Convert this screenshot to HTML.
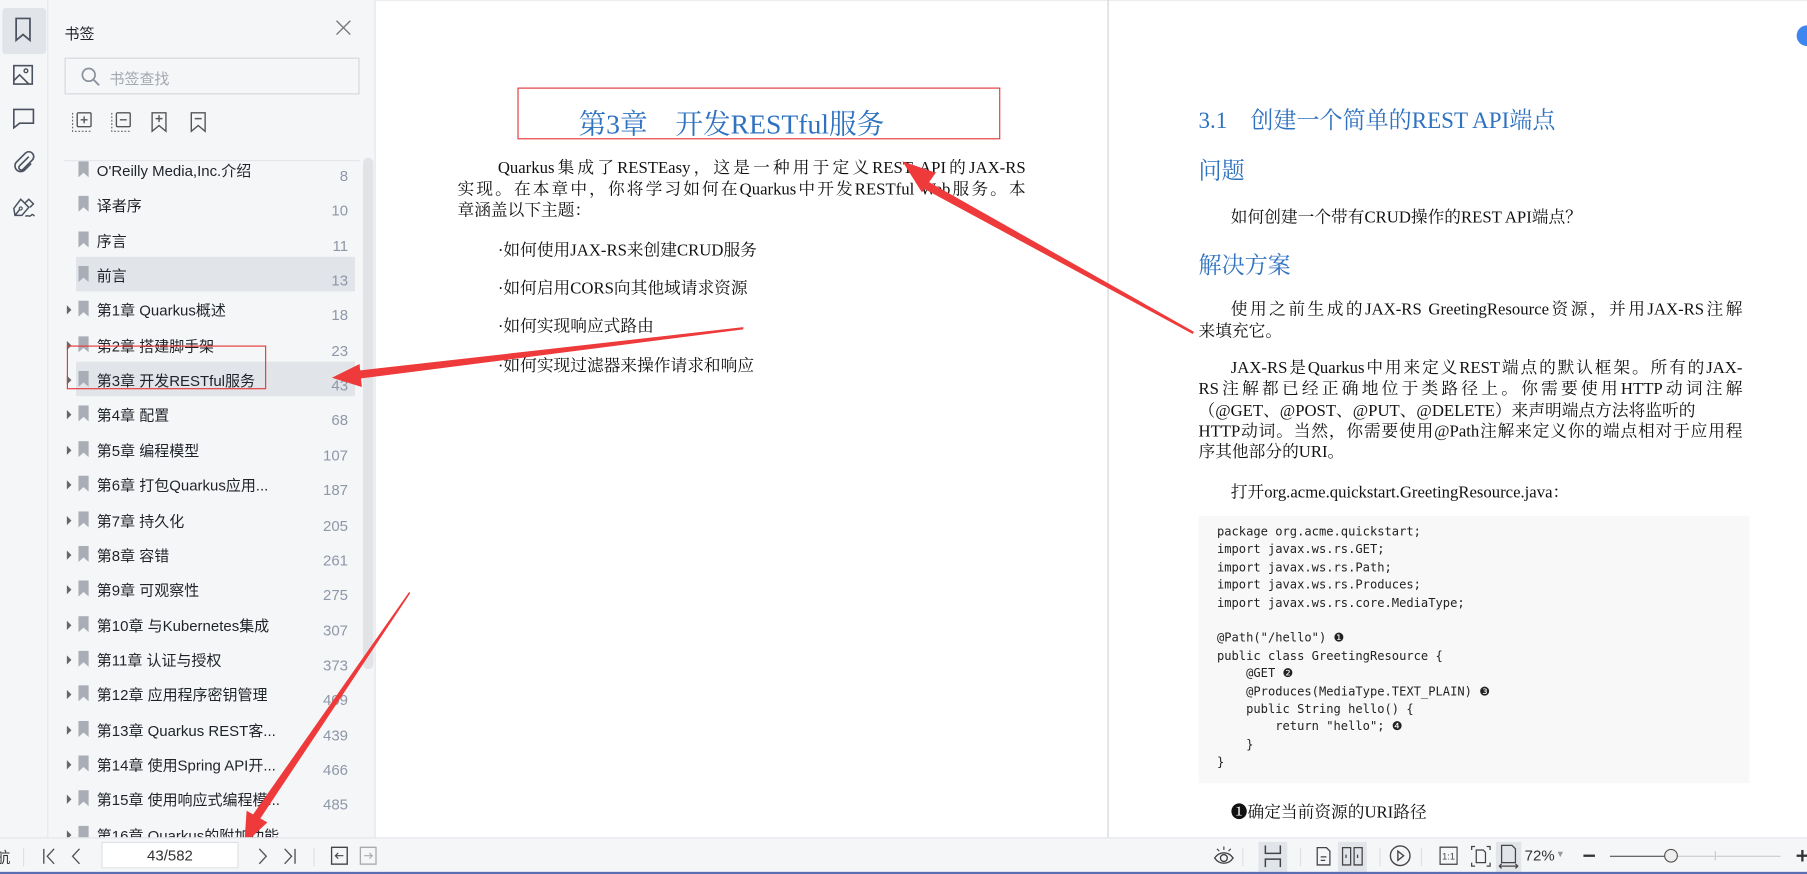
<!DOCTYPE html>
<html><head><meta charset="utf-8"><style>
*{margin:0;padding:0;box-sizing:border-box}
html,body{width:1807px;height:873px;overflow:hidden;background:#fff}
#w{position:absolute;left:0;top:0;width:1568px;height:758px;transform:scale(1.15242,1.15172);transform-origin:0 0;font-family:"Liberation Sans","Noto Sans CJK SC",sans-serif}
.a{position:absolute;white-space:nowrap}
.strip{position:absolute;left:0;top:0;width:42px;height:727px;background:#f5f6f8;border-right:1px solid #e3e5e8}
.side{position:absolute;left:42px;top:0;width:284px;height:727px;background:#f5f6f8;border-right:1px solid #e3e5e8}
.row{position:absolute;left:66px;width:242px;height:30px}
.row .t{position:absolute;left:18px;top:6px;font-size:13px;color:#1f2329}
.row .n{position:absolute;right:6px;top:13px;font-size:13px;color:#8e97a8}
.row .bm{position:absolute;left:2px;top:8px}
.row .tri{position:absolute;left:-8px;top:12px;width:0;height:0;border-left:4px solid #666;border-top:4px solid transparent;border-bottom:4px solid transparent}
.hl{background:#e1e4e9}
.ser{font-family:"Liberation Serif","Noto Serif CJK SC",serif;color:#111}
.blue{color:#2f72c0}
.jl{text-align:justify;text-align-last:justify;white-space:normal}
.code{font-family:"DejaVu Sans Mono","Liberation Mono",monospace;font-size:10.5px;color:#222;line-height:15.4px;white-space:pre}
.bb{position:absolute;left:0;top:727px;width:1568px;height:31px;background:#f5f6f8;border-top:1px solid #e3e5e8}
.ic{position:absolute}
.sep{position:absolute;top:8px;width:1px;height:16px;background:#dcdfe3}
</style></head><body><div id="w">

<div class="strip">
 <div class="a" style="left:2px;top:7px;width:38px;height:40px;background:#e1e4e9;border-radius:3px"></div>
 <svg class="ic" style="left:12px;top:15px" width="16" height="22" viewBox="0 0 16 22"><path d="M2 1h12v19l-6-5-6 5z" fill="none" stroke="#4a5160" stroke-width="1.5"/></svg>
 <svg class="ic" style="left:11px;top:56px" width="18" height="18" viewBox="0 0 18 18"><rect x="1" y="1" width="16" height="16" fill="none" stroke="#4a5160" stroke-width="1.4"/><circle cx="11.5" cy="5.5" r="1.6" fill="none" stroke="#4a5160" stroke-width="1.2"/><path d="M1 14l5-5 8 8" fill="none" stroke="#4a5160" stroke-width="1.4"/></svg>
 <svg class="ic" style="left:11px;top:94px" width="19" height="18" viewBox="0 0 19 18"><path d="M1 1h17v12H6l-5 4z" fill="none" stroke="#4a5160" stroke-width="1.4"/></svg>
 <svg class="ic" style="left:11px;top:131px" width="19" height="19" viewBox="0 0 19 19"><path d="M14 5L6 13a2 2 0 0 0 3 3l8-8a4 4 0 0 0-6-6L3 10a5 5 0 0 0 7 7l6-6" fill="none" stroke="#4a5160" stroke-width="1.4"/></svg>
 <svg class="ic" style="left:10px;top:171px" width="21" height="20" viewBox="0 0 21 20"><path d="M8 2l7 7-6 7H3l-1-6z M3 16l4-5 M12 5l3-3 4 4-3 3 M12 17c2-2 3 1 5-1s2 1 3 0" fill="none" stroke="#4a5160" stroke-width="1.3"/><circle cx="8" cy="10" r="1.3" fill="none" stroke="#4a5160"/></svg>
</div>

<div class="side">
 <div class="a" style="left:14px;top:19px;font-size:13px;color:#1f2329">书签</div>
 <svg class="ic" style="left:249px;top:17px" width="14" height="14" viewBox="0 0 14 14"><path d="M1 1l12 12M13 1L1 13" stroke="#777" stroke-width="1.2"/></svg>
 <div class="a" style="left:14px;top:50px;width:256px;height:32px;border:1px solid #d4d7dc;background:#f5f6f8"></div>
 <svg class="ic" style="left:28px;top:58px" width="17" height="17" viewBox="0 0 17 17"><circle cx="7" cy="7" r="5.5" fill="none" stroke="#8a919c" stroke-width="1.5"/><path d="M11 11l5 5" stroke="#8a919c" stroke-width="1.6"/></svg>
 <div class="a" style="left:53px;top:58px;font-size:13px;color:#a3a8b0">书签查找</div>
 <svg class="ic" style="left:20px;top:97px" width="18" height="18" viewBox="0 0 18 18"><path d="M1 1v16h16" fill="none" stroke="#666" stroke-dasharray="1.5 1.5"/><rect x="5" y="1" width="12" height="12" rx="1" fill="none" stroke="#555" stroke-width="1.2"/><path d="M11 4v6M8 7h6" stroke="#555" stroke-width="1.2"/></svg>
 <svg class="ic" style="left:54px;top:97px" width="18" height="18" viewBox="0 0 18 18"><path d="M1 1v16h16" fill="none" stroke="#666" stroke-dasharray="1.5 1.5"/><rect x="5" y="1" width="12" height="12" rx="1" fill="none" stroke="#555" stroke-width="1.2"/><path d="M8 7h6" stroke="#555" stroke-width="1.2"/></svg>
 <svg class="ic" style="left:89px;top:97px" width="14" height="18" viewBox="0 0 14 18"><path d="M1 1h12v16l-6-5-6 5z" fill="none" stroke="#555" stroke-width="1.2"/><path d="M7 3v6M4 6h6" stroke="#555" stroke-width="1.2"/></svg>
 <svg class="ic" style="left:123px;top:97px" width="14" height="18" viewBox="0 0 14 18"><path d="M1 1h12v16l-6-5-6 5z" fill="none" stroke="#555" stroke-width="1.2"/><path d="M4 6h6" stroke="#555" stroke-width="1.2"/></svg>
 <div class="a" style="left:14px;top:139px;width:256px;height:1px;background:#e2e4e8"></div>
 <div class="a" style="left:273px;top:137px;width:9px;height:444px;border-radius:5px;background:#e1e3e7"></div>
</div>

<div id="rows"></div>
<script>
var R=[["O'Reilly Media,Inc.介绍","8",0],["译者序","10",0],["序言","11",0],["前言","13",0,1],["第1章 Quarkus概述","18",1],["第2章 搭建脚手架","23",1],["第3章 开发RESTful服务","43",1,1],["第4章 配置","68",1],["第5章 编程模型","107",1],["第6章 打包Quarkus应用...","187",1],["第7章 持久化","205",1],["第8章 容错","261",1],["第9章 可观察性","275",1],["第10章 与Kubernetes集成","307",1],["第11章 认证与授权","373",1],["第12章 应用程序密钥管理","409",1],["第13章 Quarkus REST客...","439",1],["第14章 使用Spring API开...","466",1],["第15章 使用响应式编程模...","485",1],["第16章 Quarkus的附加功能","",1]];
var h="";R.forEach(function(r,i){var y=132+i*30.35;h+='<div class="row'+(r[3]?' hl':'')+'" style="top:'+y+'px">'+(r[2]?'<div class="tri"></div>':'')+'<svg class="bm" width="9" height="14" viewBox="0 0 9 14"><path d="M0 0h9v14l-4.5-4L0 14z" fill="#a9aeb6"/></svg><div class="t">'+r[0]+'</div><div class="n">'+r[1]+'</div></div>';});
document.getElementById("rows").innerHTML=h;
</script>

<!-- pages -->
<div class="a" style="left:326px;top:0;width:1242px;height:1px;background:#eee"></div>
<div class="a" style="left:961px;top:0;width:1px;height:727px;background:#cfd2d6"></div>
<div class="a" style="left:1559px;top:22px;width:18px;height:18px;border-radius:50%;background:#3d86f0"></div>

<div class="a" style="left:449px;top:76px;width:419px;height:45px;border:1px solid #e5393b"></div>
<div class="a ser blue" style="left:502px;top:88px;font-size:24px;color:#2f72c0">第3章　开发RESTful服务</div>
<div class="a ser" style="left:397px;top:137px;width:493px;font-size:14.5px;line-height:18.5px">
 <div class="jl" style="text-indent:35px">Quarkus集成了RESTEasy，这是一种用于定义REST API的JAX-RS</div>
 <div class="jl">实现。在本章中，你将学习如何在Quarkus中开发RESTful Web服务。本</div>
 <div>章涵盖以下主题：</div>
</div>
<div class="a ser" style="left:432px;top:206px;font-size:14.5px">·如何使用JAX-RS来创建CRUD服务</div>
<div class="a ser" style="left:432px;top:239px;font-size:14.5px">·如何启用CORS向其他域请求资源</div>
<div class="a ser" style="left:432px;top:272px;font-size:14.5px">·如何实现响应式路由</div>
<div class="a ser" style="left:432px;top:306px;font-size:14.5px">·如何实现过滤器来操作请求和响应</div>

<div class="a ser blue" style="left:1040px;top:88px;font-size:20px;color:#2f72c0">3.1　创建一个简单的REST API端点</div>
<div class="a ser blue" style="left:1040px;top:132px;font-size:20px;color:#2f72c0">问题</div>
<div class="a ser" style="left:1068px;top:177px;font-size:14.5px">如何创建一个带有CRUD操作的REST API端点？</div>
<div class="a ser blue" style="left:1040px;top:214px;font-size:20px;color:#2f72c0">解决方案</div>
<div class="a ser" style="left:1040px;top:260px;width:472px;font-size:14.5px;line-height:18.5px">
 <div class="jl" style="text-indent:28px">使用之前生成的JAX-RS GreetingResource资源，并用JAX-RS注解</div>
 <div>来填充它。</div>
</div>
<div class="a ser" style="left:1040px;top:311px;width:472px;font-size:14.5px;line-height:18.3px">
 <div class="jl" style="text-indent:28px">JAX-RS是Quarkus中用来定义REST端点的默认框架。所有的JAX-</div>
 <div class="jl">RS注解都已经正确地位于类路径上。你需要使用HTTP动词注解</div>
 <div>（@GET、@POST、@PUT、@DELETE）来声明端点方法将监听的</div>
 <div class="jl">HTTP动词。当然，你需要使用@Path注解来定义你的端点相对于应用程</div>
 <div>序其他部分的URI。</div>
</div>
<div class="a ser" style="left:1068px;top:416px;font-size:14.5px">打开org.acme.quickstart.GreetingResource.java：</div>
<div class="a" style="left:1040px;top:448px;width:478px;height:232px;background:#f8f8f8"></div>
<div class="a code" style="left:1056px;top:455px">package org.acme.quickstart;
import javax.ws.rs.GET;
import javax.ws.rs.Path;
import javax.ws.rs.Produces;
import javax.ws.rs.core.MediaType;

@Path("/hello") ❶
public class GreetingResource {
    @GET ❷
    @Produces(MediaType.TEXT_PLAIN) ❸
    public String hello() {
        return "hello"; ❹
    }
}</div>
<div class="a ser" style="left:1068px;top:694px;font-size:14.5px">❶确定当前资源的URI路径</div>

<div class="a" style="left:58px;top:300px;width:173px;height:38px;border:1px solid #e5393b"></div>

<svg class="a" style="left:0;top:0" width="1568" height="758">
 <g fill="#ee3a3a">
  <polygon points="1035,290 1036,288 806,158 802,164"/>
  <polygon points="783,140 812,150 800,167"/>
  <polygon points="645,284 645,286 310,329 309,322"/>
  <polygon points="288,328 312,316 314,336"/>
  <polygon points="355,514 356,515 225,712 219,708"/>
  <polygon points="212,733 214,704 232,714"/>
 </g>
</svg>

<div class="bb">
 <div class="a" style="left:-4px;top:6px;font-size:13px;color:#333">航</div>
 <div class="sep" style="left:20px"></div>
 <svg class="ic" style="left:37px;top:8px" width="12" height="15" viewBox="0 0 12 15"><path d="M1 1v13M10 1L4 7.5 10 14" fill="none" stroke="#555" stroke-width="1.2"/></svg>
 <svg class="ic" style="left:61px;top:8px" width="10" height="15" viewBox="0 0 10 15"><path d="M8 1L2 7.5 8 14" fill="none" stroke="#555" stroke-width="1.2"/></svg>
 <div class="a" style="left:88px;top:3px;width:119px;height:23px;background:#fff;border:1px solid #dde0e4;text-align:center;font-size:13px;line-height:21px;color:#333">43/582</div>
 <svg class="ic" style="left:223px;top:8px" width="10" height="15" viewBox="0 0 10 15"><path d="M2 1l6 6.5L2 14" fill="none" stroke="#555" stroke-width="1.2"/></svg>
 <svg class="ic" style="left:245px;top:8px" width="12" height="15" viewBox="0 0 12 15"><path d="M11 1v13M2 1l6 6.5L2 14" fill="none" stroke="#555" stroke-width="1.2"/></svg>
 <div class="sep" style="left:272px"></div>
 <svg class="ic" style="left:287px;top:7px" width="15" height="16" viewBox="0 0 15 16"><rect x="0.7" y="0.7" width="13.6" height="14.6" fill="none" stroke="#444" stroke-width="1.2"/><path d="M11 8H4M6.5 5.5L4 8l2.5 2.5" fill="none" stroke="#444"/></svg>
 <svg class="ic" style="left:312px;top:7px" width="15" height="16" viewBox="0 0 15 16"><rect x="0.7" y="0.7" width="13.6" height="14.6" fill="none" stroke="#aaa" stroke-width="1.2"/><path d="M4 8h7M8.5 5.5L11 8l-2.5 2.5" fill="none" stroke="#aaa"/></svg>

 <svg class="ic" style="left:1052px;top:6px" width="20" height="18" viewBox="0 0 20 18"><path d="M2 11c4-6 12-6 16 0-4 6-12 6-16 0z" fill="none" stroke="#444" stroke-width="1.2"/><circle cx="10" cy="11" r="3" fill="none" stroke="#444" stroke-width="1.2"/><path d="M10 1v3M4 3l2 2M16 3l-2 2" stroke="#444"/></svg>
 <div class="sep" style="left:1078px"></div>
 <div class="a" style="left:1092px;top:3px;width:25px;height:26px;background:#e1e4e9"></div>
 <svg class="ic" style="left:1096px;top:6px" width="17" height="19" viewBox="0 0 17 19"><path d="M2 0v7h13V0M2 19v-7h13v7" fill="none" stroke="#444" stroke-width="1.3"/></svg>
 <div class="sep" style="left:1128px"></div>
 <svg class="ic" style="left:1142px;top:7px" width="13" height="17" viewBox="0 0 13 17"><path d="M1 1h8l3 3v12H1z M4 9h5M4 12h4" fill="none" stroke="#444" stroke-width="1.1"/></svg>
 <div class="a" style="left:1161px;top:3px;width:25px;height:26px;background:#e1e4e9"></div>
 <svg class="ic" style="left:1164px;top:7px" width="19" height="17" viewBox="0 0 19 17"><path d="M1 1h7v15H1zM11 1h7v15h-7zM4 7v3M14 7v3" fill="none" stroke="#444" stroke-width="1.1"/></svg>
 <div class="sep" style="left:1197px"></div>
 <svg class="ic" style="left:1205px;top:5px" width="20" height="20" viewBox="0 0 20 20"><circle cx="10" cy="10" r="8.5" fill="none" stroke="#444" stroke-width="1.2"/><path d="M8 6l5 4-5 4z" fill="none" stroke="#444" stroke-width="1.2"/></svg>
 <div class="sep" style="left:1233px"></div>
 <svg class="ic" style="left:1249px;top:7px" width="16" height="16" viewBox="0 0 16 16"><rect x="0.6" y="0.6" width="14.8" height="14.8" fill="none" stroke="#444" stroke-width="1.1"/><text x="8" y="11.5" font-size="8" text-anchor="middle" fill="#444" font-family="Liberation Sans">1:1</text></svg>
 <svg class="ic" style="left:1276px;top:6px" width="18" height="19" viewBox="0 0 18 19"><path d="M1 4V1h3M14 1h3v3M17 15v3h-3M4 18H1v-3M5 4h6l2 2v9H5z" fill="none" stroke="#444" stroke-width="1.1"/></svg>
 <div class="a" style="left:1298px;top:3px;width:22px;height:26px;background:#e1e4e9"></div>
 <svg class="ic" style="left:1300px;top:5px" width="18" height="22" viewBox="0 0 18 22"><path d="M3 1h9l3 3v12H3z M1 19h16M3 17l-2 2 2 2M15 17l2 2-2 2" fill="none" stroke="#444" stroke-width="1.1"/></svg>
 <div class="a" style="left:1323px;top:7px;font-size:13px;color:#333">72%</div>
 <div class="a" style="left:1350px;top:9px;font-size:8px;color:#999">▼</div>
 <div class="a" style="left:1374px;top:14px;width:10px;height:2px;background:#333"></div>
 <div class="a" style="left:1397px;top:15px;width:54px;height:1px;background:#555"></div>
 <div class="a" style="left:1451px;top:15px;width:94px;height:1px;background:#ccc"></div>
 <div class="a" style="left:1488px;top:11px;width:1px;height:8px;background:#ccc"></div>
 <div class="a" style="left:1444px;top:9px;width:12px;height:12px;border-radius:50%;background:#eee;border:1px solid #555"></div>
 <div class="a" style="left:1559px;top:14px;width:10px;height:2px;background:#333"></div>
 <div class="a" style="left:1563px;top:10px;width:2px;height:10px;background:#333"></div>
 <div class="a" style="left:0;top:29px;width:1568px;height:2px;background:#5a6db3"></div>
</div>
</div></body></html>
